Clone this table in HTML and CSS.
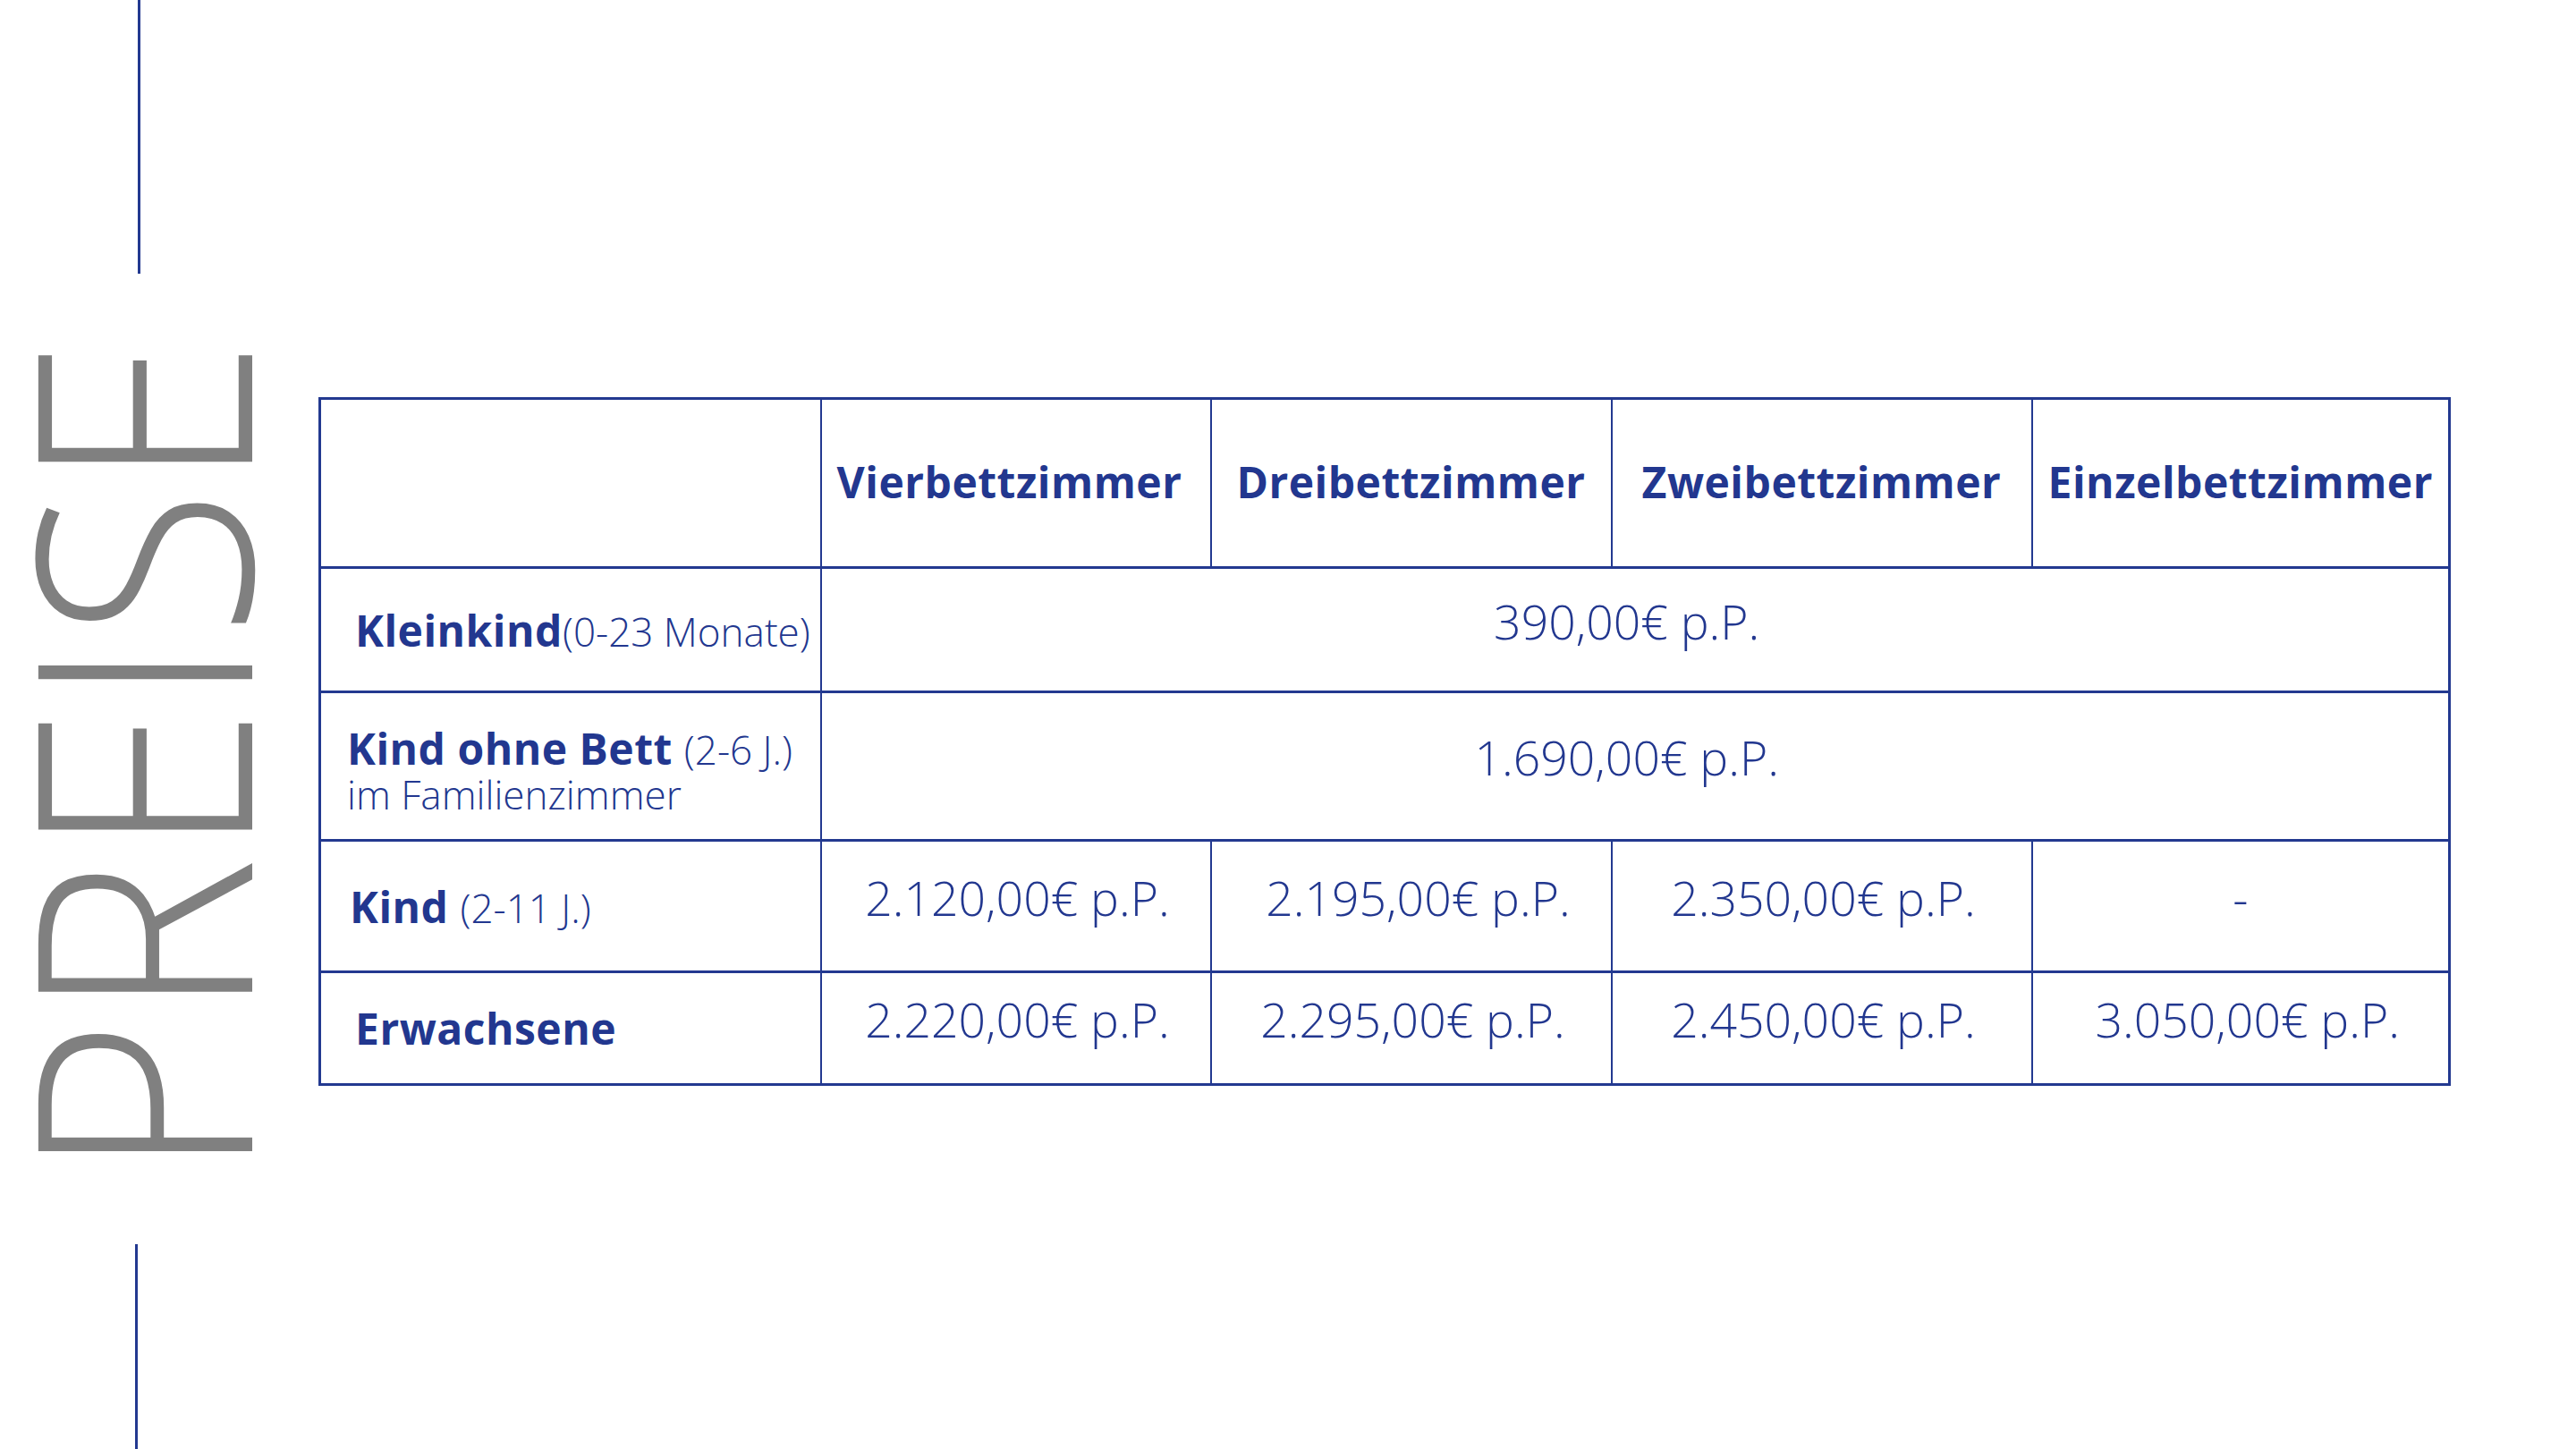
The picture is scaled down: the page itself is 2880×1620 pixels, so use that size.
FILE: index.html
```html
<!DOCTYPE html>
<html lang="de">
<head>
<meta charset="utf-8">
<title>Preise</title>
<link rel="stylesheet" href="styles.css">
</head>
<body>
<div class="slide">
  <aside class="side">
    <span class="rule rule-top"></span>
    <div class="title-wrap"><h1 class="title">PREISE</h1></div>
    <span class="rule rule-bottom"></span>
  </aside>
  <main class="content">
    <table class="prices">
      <colgroup>
        <col class="c-label">
        <col class="c-four">
        <col class="c-three">
        <col class="c-two">
        <col class="c-one">
      </colgroup>
      <thead>
        <tr class="r-head">
          <th class="corner"></th>
          <th class="h-four">Vierbettzimmer</th>
          <th>Dreibettzimmer</th>
          <th>Zweibettzimmer</th>
          <th>Einzelbettzimmer</th>
        </tr>
      </thead>
      <tbody>
        <tr class="r-baby">
          <th class="lbl lbl-a"><strong>Kleinkind</strong><span class="note">(0-23 Monate)</span></th>
          <td class="price price-span" colspan="4">390,00€ p.P.</td>
        </tr>
        <tr class="r-nobed">
          <th class="lbl lbl-b"><span class="line1"><strong>Kind ohne Bett</strong> <span class="note">(2-6 J.)</span></span><span class="line2">im Familienzimmer</span></th>
          <td class="price price-span" colspan="4">1.690,00€ p.P.</td>
        </tr>
        <tr class="r-child">
          <th class="lbl lbl-c"><strong>Kind</strong> <span class="note">(2-11 J.)</span></th>
          <td class="price">2.120,00€ p.P.</td>
          <td class="price price-right">2.195,00€ p.P.</td>
          <td class="price">2.350,00€ p.P.</td>
          <td class="price price-dash">-</td>
        </tr>
        <tr class="r-adult">
          <th class="lbl lbl-a"><strong>Erwachsene</strong></th>
          <td class="price">2.220,00€ p.P.</td>
          <td class="price">2.295,00€ p.P.</td>
          <td class="price">2.450,00€ p.P.</td>
          <td class="price price-right">3.050,00€ p.P.</td>
        </tr>
      </tbody>
    </table>
  </main>
</div>
</body>
</html>
```
FILE: styles.css
```css
html, body {
  margin: 0;
  padding: 0;
  background: #ffffff;
}

.slide {
  display: flex;
  width: 2880px;
  height: 1620px;
  overflow: hidden;
  background: #ffffff;
  font-family: "Open Sans", "Noto Sans", sans-serif;
}

/* left decoration */
.side {
  flex: none;
  width: 356px;
  display: flex;
  flex-direction: column;
  align-items: flex-start;
}

.rule {
  display: block;
  width: 3px;
  background: #233990;
}

.rule-top {
  height: 306px;
  margin-left: 154px;
}

.rule-bottom {
  height: 229px;
  margin-left: 151px;
  margin-top: auto;
}

.title-wrap {
  margin-left: 22px;
  margin-top: 22px;
  width: 260px;
  height: 1040px;
  display: flex;
  flex-direction: column;
  align-items: center;
  justify-content: center;
}

.title {
  flex: none;
  margin: 0;
  writing-mode: vertical-rl;
  font-size: 335px;
  font-weight: 300;
  line-height: 260px;
  color: #808080;
  white-space: nowrap;
  transform: rotate(180deg) scaleY(0.91);
}

/* table */
.content {
  flex: 1;
  padding-top: 444px;
}

.prices {
  border-collapse: collapse;
  table-layout: fixed;
  width: 2381px;
  color: #22378f;
  border: 3px solid #233990;
}

.c-label { width: 560px; }
.c-four  { width: 436px; }
.c-three { width: 448px; }
.c-two   { width: 470px; }
.c-one   { width: 467px; }

.prices th,
.prices td {
  border-top: 3px solid #233990;
  border-bottom: 3px solid #233990;
  border-left: 2px solid #233990;
  border-right: 2px solid #233990;
  padding: 0;
  text-align: center;
  vertical-align: middle;
}

.r-head { height: 189px; }
.r-baby { height: 139px; }
.r-nobed { height: 166px; }
.r-child { height: 147px; }
.r-adult { height: 126px; }

.r-head th {
  font-size: 48px;
  font-weight: 700;
  letter-spacing: 0.5px;
  padding-bottom: 4px;
}

.r-head .h-four {
  padding-right: 14px;
}

.lbl {
  text-align: left !important;
  font-size: 48px;
  font-weight: 700;
  letter-spacing: 0.5px;
  white-space: nowrap;
}

.lbl strong {
  font-weight: 700;
}

.lbl-a { padding-left: 38px !important; }
.lbl-b { padding-left: 29px !important; padding-top: 14px !important; }
.lbl-c { padding-left: 32px !important; }

.note {
  font-size: 44px;
  font-weight: 300;
  letter-spacing: 0;
}

.line1 {
  display: block;
  line-height: 48px;
}

.line2 {
  display: block;
  line-height: 52px;
  font-size: 44px;
  font-weight: 300;
  letter-spacing: 0;
}

.price {
  font-size: 53.5px;
  font-weight: 300;
  padding-bottom: 20px !important;
  padding-left: 4px !important;
  white-space: nowrap;
}

.price-span {
  padding-left: 0 !important;
  padding-right: 18px !important;
}

.price-right {
  padding-left: 16px !important;
}

.price-dash {
  padding-left: 0 !important;
}
```
